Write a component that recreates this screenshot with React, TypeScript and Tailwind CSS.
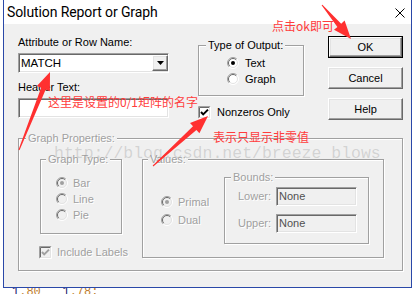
import type { ReactNode } from 'react';

const sunken =
  'border border-t-[#a0a0a0] border-l-[#a0a0a0] border-b-white border-r-white shadow-[inset_1px_1px_0_#696969,inset_-1px_-1px_0_#e3e3e3]';
const raised =
  'border border-t-white border-l-white border-b-[#696969] border-r-[#696969] shadow-[inset_-1px_-1px_0_#a0a0a0,inset_1px_1px_0_#e3e3e3]';
const dim = 'text-[#a0a0a0] [text-shadow:1px_1px_0_#fff]';

function Group({
  label,
  disabled,
  className,
  labelClass,
  children,
}: {
  label: string;
  disabled?: boolean;
  className: string;
  labelClass: string;
  children?: ReactNode;
}) {
  return (
    <div className={`shrink-0 border border-[#a0a0a0] shadow-[inset_1px_1px_0_#fff,1px_1px_0_#fff] ${className}`}>
      <div className={`-mt-[7px] w-fit bg-[#f0f0f0] px-[2px] leading-[13px] ${labelClass} ${disabled ? dim : 'text-black'}`}>
        {label}
      </div>
      {children}
    </div>
  );
}

function Radio({ checked, disabled }: { checked?: boolean; disabled?: boolean }) {
  return (
    <svg width="12" height="12" viewBox="0 0 12 12" className="shrink-0">
      <circle cx="6" cy="6" r="5.5" fill={disabled ? '#f0f0f0' : '#fff'} />
      <path d="M2.1 9.9 A5.5 5.5 0 0 1 9.9 2.1" fill="none" stroke="#a0a0a0" />
      <path d="M9.9 2.1 A5.5 5.5 0 0 1 2.1 9.9" fill="none" stroke="#fff" />
      <path d="M2.8 9.2 A4.5 4.5 0 0 1 9.2 2.8" fill="none" stroke="#696969" />
      <path d="M9.2 2.8 A4.5 4.5 0 0 1 2.8 9.2" fill="none" stroke="#e3e3e3" />
      {checked && <circle cx="6" cy="6" r="2" fill={disabled ? '#a0a0a0' : '#000'} />}
    </svg>
  );
}

function Check({ disabled }: { disabled?: boolean }) {
  return (
    <svg width="13" height="13" viewBox="0 0 13 13" className="shrink-0">
      <rect x="0" y="0" width="13" height="13" fill={disabled ? '#f0f0f0' : '#fff'} />
      <path d="M0.5 12.5 V0.5 H12.5" fill="none" stroke="#a0a0a0" />
      <path d="M12.5 0.5 V12.5 H0.5" fill="none" stroke="#fff" />
      <path d="M1.5 11.5 V1.5 H11.5" fill="none" stroke="#696969" />
      <path d="M11.5 1.5 V11.5 H1.5" fill="none" stroke="#e3e3e3" />
      <polyline points="3,6 5.2,8.4 10,3.6" fill="none" stroke={disabled ? '#a0a0a0' : '#000'} strokeWidth="2" />
    </svg>
  );
}

function Btn({ label, def }: { label: string; def?: boolean }) {
  const inner = (
    <div className={`flex h-full w-full items-center justify-center bg-[#f0f0f0] ${raised}`}>{label}</div>
  );
  return def ? (
    <div className="h-[22px] w-[75px] border border-black">{inner}</div>
  ) : (
    <div className="h-[22px] w-[75px]">{inner}</div>
  );
}

export default function App() {
  return (
    <div className="relative h-[294px] w-[415px] overflow-hidden bg-white font-['Liberation_Sans',Arial,sans-serif] text-[11px] leading-[13px] text-black">
      <div className="ml-[3px] flex h-[288px] w-[409px] flex-col border-x border-b border-[#2a48a8] bg-[#f0f0f0]">
        {/* title bar */}
        <div className="flex h-[24px] shrink-0 items-center justify-between bg-white pl-[3px] pr-[6px]">
          <span className="font-['Roboto','Noto_Sans',sans-serif] text-[14px] leading-[24px] tracking-[-0.1px]">
            Solution Report or Graph
          </span>
          <svg width="10" height="10" viewBox="0 0 10 10" className="mt-[1px]">
            <path d="M0.5 0.5 L9.5 9.5 M9.5 0.5 L0.5 9.5" stroke="#000" strokeWidth="1" />
          </svg>
        </div>

        {/* top section */}
        <div className="flex h-[114px] shrink-0 items-start pl-[14px]">
          <div className="w-[151px] shrink-0 pt-[12px]">
            <div>Attribute or Row Name:</div>
            <div className={`mt-[4px] flex h-[20px] items-center bg-white pl-[2px] ${sunken}`}>
              <span className="text-[11.5px]">MATCH</span>
              <div className={`ml-auto flex h-[16px] w-[16px] items-center justify-center bg-[#f0f0f0] ${raised}`}>
                <svg width="7" height="4" viewBox="0 0 7 4">
                  <path d="M0 0 H7 L3.5 4 Z" fill="#000" />
                </svg>
              </div>
            </div>
            <div className="mt-[8px]">Header Text:</div>
            <div className={`mt-[4px] h-[20px] bg-white ${sunken}`} />
          </div>

          <div className="ml-[29px] w-[106px] shrink-0">
            <Group label="Type of Output:" className="mt-[21px] h-[51px] w-[106px]" labelClass="ml-[7px]">
              <div className="mt-[4px] flex h-[14px] items-center pl-[28px]">
                <Radio checked />
                <span className="ml-[6px]">Text</span>
              </div>
              <div className="mt-[2px] flex h-[14px] items-center pl-[28px]">
                <Radio />
                <span className="ml-[6px]">Graph</span>
              </div>
            </Group>
            <div className="mt-[10px] flex h-[13px] w-[120px] items-center">
              <Check />
              <span className="ml-[6px] whitespace-nowrap">Nonzeros Only</span>
            </div>
          </div>

          <div className="ml-[24px] flex flex-col gap-[9px] pt-[12px]">
            <Btn label="OK" def />
            <Btn label="Cancel" />
            <Btn label="Help" />
          </div>
        </div>

        {/* graph properties */}
        <Group label="Graph Properties:" disabled className="ml-[14px] h-[133px] w-[385px]" labelClass="ml-[7px]">
          <div className="mt-[14px] flex items-start pl-[21px]">
            <div className="w-[82px] shrink-0">
              <Group label="Graph Type:" disabled className="h-[75px] w-[82px]" labelClass="ml-[5px]">
                <div className="mt-[9px] pl-[15px]">
                  {['Bar', 'Line', 'Pie'].map((t, i) => (
                    <div key={t} className="flex h-[16px] items-center">
                      <Radio checked={i === 0} disabled />
                      <span className={`ml-[5px] ${dim}`}>{t}</span>
                    </div>
                  ))}
                </div>
              </Group>
              <div className="-ml-[1px] mt-[12px] flex h-[13px] w-[110px] items-center">
                <Check disabled />
                <span className={`ml-[5px] whitespace-nowrap ${dim}`}>Include Labels</span>
              </div>
            </div>

            <Group label="Values:" disabled className="ml-[20px] h-[99px] w-[242px]" labelClass="ml-[5px]">
              <div className="flex items-start">
                <div className="ml-[18px] mt-[27px] w-[63px] shrink-0">
                  {['Primal', 'Dual'].map((t, i) => (
                    <div key={t} className="flex h-[18px] items-center">
                      <Radio checked={i === 0} disabled />
                      <span className={`ml-[5px] ${dim}`}>{t}</span>
                    </div>
                  ))}
                </div>
                <Group label="Bounds:" disabled className="mt-[11px] h-[67px] w-[145px]" labelClass="ml-[6px]">
                  {['Lower:', 'Upper:'].map((t, i) => (
                    <div key={t} className={`flex h-[19px] items-center pl-[13px] ${i === 0 ? 'mt-[3px]' : 'mt-[8px]'}`}>
                      <span className={`w-[38px] shrink-0 ${dim}`}>{t}</span>
                      <div className={`flex h-[19px] w-[81px] items-center bg-[#f0f0f0] pl-[2px] text-[#505050] ${sunken}`}>
                        None
                      </div>
                    </div>
                  ))}
                </Group>
              </div>
            </Group>
          </div>
        </Group>
      </div>

      {/* background text peeking below */}
      <div className="h-[6px] overflow-hidden pl-[12px] font-['Liberation_Mono',monospace] text-[12px] leading-[12px]">
        <div className="-mt-[2px] whitespace-pre text-[#c08030]">
          <span className="text-[#1a1a70]">1</span>.80   <span className="text-[#1a1a70]">1</span>.78:
        </div>
      </div>

      {/* annotations */}
      <div className="pointer-events-none absolute left-[54px] top-[146px] whitespace-pre font-['Liberation_Mono',monospace] text-[16.5px] leading-none text-[rgba(150,150,150,0.32)]">
        http://blog.csdn.net/breeze_blows
      </div>
      <svg className="pointer-events-none absolute left-0 top-0" width="415" height="294" viewBox="0 0 415 294">
        <polygon
          points="18.5,149.8 41.1,87.8 36.9,86.1 50,72 49.9,91.3 45.7,89.6 19.5,150.2"
          fill="#ff3030"
        />
        <polygon
          points="321.6,5.3 337.4,26.9 334,29.8 351,39 344.6,20.4 341.2,23.7 322.4,4.7"
          fill="#ff3030"
        />
        <polygon
          points="152.7,165.6 193,126.3 190,122.9 208,116 199.4,133.3 196.4,130 153.3,166.4"
          fill="#ff3030"
        />
      </svg>
      <div className="pointer-events-none absolute left-[272px] top-[20px] font-['Noto_Sans_CJK_SC',sans-serif] text-[12px] leading-none text-[#ff3c3c]">
        点击ok即可
      </div>
      <div className="pointer-events-none absolute left-[48px] top-[96px] font-['Noto_Sans_CJK_SC',sans-serif] text-[12px] leading-none text-[#ff3c3c]">
        这里是设置的0/1矩阵的名字
      </div>
      <div className="pointer-events-none absolute left-[213px] top-[131px] font-['Noto_Sans_CJK_SC',sans-serif] text-[12px] leading-none text-[#ff3c3c]">
        表示只显示非零值
      </div>
    </div>
  );
}
